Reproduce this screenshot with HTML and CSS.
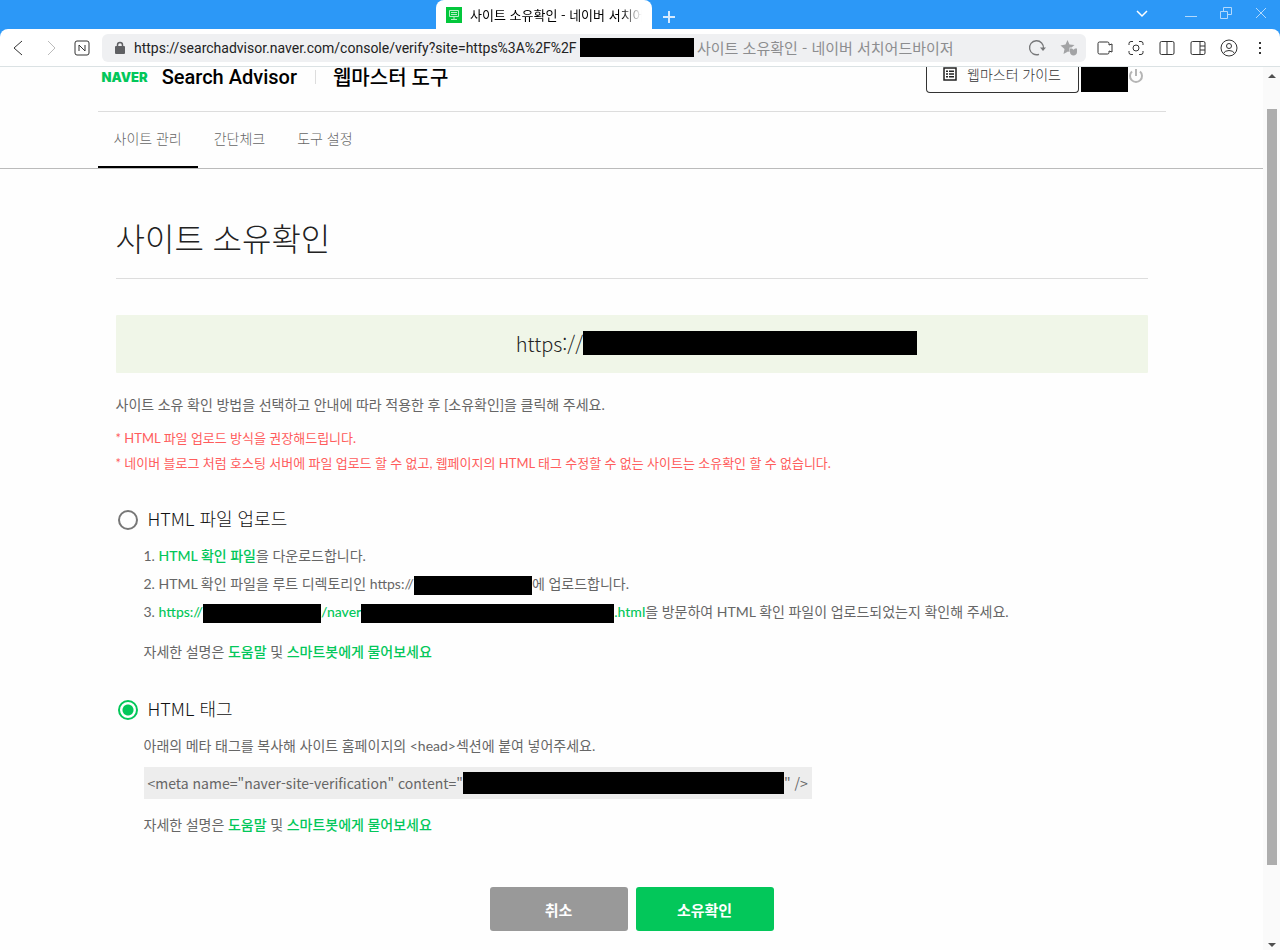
FILE: index.html
```
<!DOCTYPE html>
<html lang="ko">
<head>
    <meta charset="UTF-8">
    <meta name="viewport" content="width=device-width, initial-scale=1.0">
    <title>사이트 소유확인 - 네이버 서치어드바이저</title>
    <link rel="stylesheet" href="styles.css">
</head>
<body>
    <!-- Tab strip -->
    <div class="tab-strip">
        <div class="tab">
            <svg width="16" height="16" viewBox="0 0 16 16"><path fill="#03c73c" d="M0 0h16v16H0z"/><path fill="none" stroke="#b5efc6" d="M3.500 3.500h9v6h-9zM5 5.500h6M5 7.500h6M8 9.500v3M5 12.500h6"/></svg>
            <span class="tab-title">사이트 소유확인 - 네이버 서치어드바이저</span>
        </div>
        <button class="new-tab" aria-label="새 탭"><svg width="12" height="12" viewBox="0 0 12 12"><path stroke="#d5eaff" stroke-width="2" d="M6 0v12M0 6h12"/></svg></button>
        <div class="window-buttons">
            <button aria-label="탭 목록"><svg width="12" height="12" viewBox="0 0 12 12"><path stroke="#fff" stroke-width="1.500" d="M1 4l5 5 5-5"/></svg></button>
            <button aria-label="최소화"><svg width="12" height="12" viewBox="0 0 12 12"><path stroke="#b3d9fc" d="M0 9.500h12"/></svg></button>
            <button aria-label="복원"><svg width="12" height="12" viewBox="0 0 12 12"><path stroke="#b3d9fc" d="M.5 4.500h7v7h-7zM3.500 4.500v-4h8v7h-4"/></svg></button>
            <button aria-label="닫기"><svg width="12" height="12" viewBox="0 0 12 12"><path stroke="#b3d9fc" d="M1 1l10 10M11 1L1 11"/></svg></button>
        </div>
    </div>

    <!-- Toolbar -->
    <div class="toolbar">
        <div class="nav-buttons">
            <button aria-label="뒤로"><svg width="16" height="16" viewBox="0 0 16 16"><path d="M12 1L4 8l8 7"/></svg></button>
            <button class="off" aria-label="앞으로"><svg width="16" height="16" viewBox="0 0 16 16"><path d="M6 1l7 7-7 7"/></svg></button>
            <button aria-label="네이버 홈"><svg width="16" height="16" viewBox="0 0 16 16"><rect x="1" y="1" width="14" height="14" rx="2"/><path d="M5 11V5l6 6V5"/></svg></button>
        </div>
        <div class="address">
            <svg class="lock" width="12" height="14" viewBox="0 0 12 14"><rect x="1" y="5" width="10" height="8" rx="1" fill="#5f6063"/><path fill="none" stroke="#5f6063" stroke-width="1.500" d="M3.500 6V4a2.500 2.500 0 0 1 5 0v2"/></svg>
            <input class="url" type="text" aria-label="주소" value="https://searchadvisor.naver.com/console/verify?site=https%3A%2F%2F">
            <span class="mask mask-url"></span>
            <span class="url-title">사이트 소유확인 - 네이버 서치어드바이저</span>
            <div class="address-icons">
                <button aria-label="새로고침"><svg width="18" height="18" viewBox="0 0 18 18"><path stroke="#77787a" stroke-width="1.300" d="M11 15.300A7 7 0 1 1 15.500 9.500"/><path fill="#77787a" d="M12 8.500h6l-3 3.500z"/></svg></button>
                <button aria-label="북마크"><svg width="18" height="18" viewBox="0 0 18 18"><path fill="#a2a3a5" d="M7.500 1l2 4.500 5 .5-3 2.500H9.500v4.500L8 12.500l-4.500 2.500 1-5L.5 6.500l5-1zM10 9.500h2l1.500 1.200 1.500-1.200h2V13c0 2-1.500 3.500-3.500 3.500S10 15 10 13z"/></svg></button>
            </div>
        </div>
        <div class="tools">
            <button aria-label="녹화"><svg width="18" height="18" viewBox="0 0 18 18"><path d="M3.500 3h8q1.500 0 1.500 1.500V6l3-1v8l-3-1v1.500q0 1.500-1.500 1.500h-8Q2 15 2 13.500v-9Q2 3 3.500 3z"/></svg></button>
            <button aria-label="캡처"><svg width="18" height="18" viewBox="0 0 18 18"><path d="M2 6V4.500Q2 2.500 4 2.500h2M12 2.500h2q2 0 2 2V6M16 12v1.500q0 2-2 2h-2M6 15.500H4q-2 0-2-2V12"/><circle cx="9" cy="9" r="3"/></svg></button>
            <button aria-label="화면 분할"><svg width="18" height="18" viewBox="0 0 18 18"><rect x="2" y="2.500" width="14" height="13" rx="1.500"/><path d="M9 2.500v13"/></svg></button>
            <button aria-label="사이드바"><svg width="18" height="18" viewBox="0 0 18 18"><rect x="2" y="2.500" width="14" height="13" rx="1.500"/><path d="M11 2.500v13M11 7h5M11 11h5"/></svg></button>
            <button aria-label="프로필"><svg width="18" height="18" viewBox="0 0 18 18"><circle cx="9" cy="9" r="8"/><circle cx="9" cy="7" r="2.500"/><path d="M3.500 14.500q1-3 5.500-3t5.500 3"/></svg></button>
            <button aria-label="더보기"><svg width="18" height="18" viewBox="0 0 18 18"><path fill="#333" stroke="none" d="M8 3h2v2H8zM8 8h2v2H8zM8 13h2v2H8z"/></svg></button>
        </div>
    </div>

    <div class="viewport">
        <div class="page">
            <header class="header">
                <a class="naver" href="#">NAVER</a>
                <a class="logo" href="#">Search Advisor</a>
                <span class="service">웹마스터 도구</span>
                <div class="account">
                    <button class="guide">
                        <svg width="14" height="14" viewBox="0 0 14 14"><path fill="none" stroke="#222" stroke-width="1.500" d="M1 1h12v12H1z"/><path fill="#222" d="M3 3.500h2v1.500H3zM6 3.500h5v1.500H6zM3 6.300h2v1.500H3zM6 6.300h5v1.500H6zM3 9h2v1.500H3zM6 9h5v1.500H6z"/></svg>
                        웹마스터 가이드
                    </button>
                    <span class="mask mask-user"></span>
                    <button class="logout" aria-label="로그아웃"><svg width="16" height="16" viewBox="0 0 16 16"><path fill="none" stroke="#b5b5b5" stroke-width="2" d="M4 3.500a6 6 0 1 0 8 0M8 1v7"/></svg></button>
                </div>
            </header>
            <nav class="menu">
                <div class="menu-inner">
                    <a class="active" href="#">사이트 관리</a>
                    <a href="#">간단체크</a>
                    <a href="#">도구 설정</a>
                </div>
            </nav>

            <main class="content">
                <h1>사이트 소유확인</h1>
                <div class="site-box">https://<span class="mask mask-site"></span></div>
                <p class="intro">사이트 소유 확인 방법을 선택하고 안내에 따라 적용한 후 [소유확인]을 클릭해 주세요.</p>
                <p class="notice">* HTML 파일 업로드 방식을 권장해드립니다.</p>
                <p class="notice">* 네이버 블로그 처럼 호스팅 서버에 파일 업로드 할 수 없고, 웹페이지의 HTML 태그 수정할 수 없는 사이트는 소유확인 할 수 없습니다.</p>

                <form>
                    <section class="option">
                        <div class="option-title">
                            <input type="radio" name="method" id="method-file">
                            <label for="method-file">HTML 파일 업로드</label>
                        </div>
                        <div class="option-body">
                            <div class="step">1.&nbsp;<a href="#">HTML 확인 파일</a>을 다운로드합니다.</div>
                            <div class="step">2. HTML 확인 파일을 루트 디렉토리인 https://<span class="mask mask-host"></span>에 업로드합니다.</div>
                            <div class="step">3.&nbsp;<a href="#">https://<span class="mask mask-host"></span>/naver<span class="mask mask-file"></span>.html</a>을 방문하여 HTML 확인 파일이 업로드되었는지 확인해 주세요.</div>
                            <p class="help">자세한 설명은 <a href="#">도움말</a> 및 <a href="#">스마트봇에게 물어보세요</a></p>
                        </div>
                    </section>

                    <section class="option">
                        <div class="option-title">
                            <input type="radio" name="method" id="method-tag" checked>
                            <label for="method-tag">HTML 태그</label>
                        </div>
                        <div class="option-body">
                            <div class="step">아래의 메타 태그를 복사해 사이트 홈페이지의 &lt;head&gt;섹션에 붙여 넣어주세요.</div>
                            <code class="meta">&lt;meta name="naver-site-verification" content="<span class="mask mask-token"></span>" /&gt;</code>
                            <p class="help">자세한 설명은 <a href="#">도움말</a> 및 <a href="#">스마트봇에게 물어보세요</a></p>
                        </div>
                    </section>

                    <div class="actions">
                        <button type="button" class="cancel">취소</button>
                        <button type="button" class="confirm">소유확인</button>
                    </div>
                </form>
            </main>
        </div>
        <div class="scrollbar">
            <svg width="8" height="5" viewBox="0 0 8 5"><path fill="#505050" d="M0 5l4-4 4 4z"/></svg>
            <div class="thumb"></div>
            <svg width="8" height="5" viewBox="0 0 8 5"><path fill="#505050" d="M0 0l4 4 4-4z"/></svg>
        </div>
    </div>
</body>
</html>
```
FILE: styles.css
```
* { box-sizing: border-box; }
body {
    margin: 0;
    height: 100vh;
    display: flex;
    flex-direction: column;
    overflow: hidden;
    background-color: #2c98f7;
    color: #666;
    font-family: Lato, "Noto Sans CJK KR", sans-serif;
    font-size: 14px;
}
button {
    display: flex;
    align-items: center;
    justify-content: center;
    padding: 0;
    border: 0;
    background: none;
    font-family: inherit;
    cursor: pointer;
}
a {
    color: #03c75a;
    text-decoration: none;
}
svg {
    fill: none;
    flex-shrink: 0;
}
.mask {
    display: inline-block;
    background-color: #000;
    flex-shrink: 0;
}

/* Tab strip */
.tab-strip {
    display: flex;
    align-items: center;
    height: 29px;
    flex-shrink: 0;
    padding-left: 436px;
}
.tab {
    display: flex;
    align-items: center;
    gap: 8px;
    width: 216px;
    height: 29px;
    padding: 0 10px;
    background-color: #fff;
    border-radius: 8px 8px 0 0;
}
.tab-title {
    overflow: hidden;
    white-space: nowrap;
    font-family: "Noto Sans CJK KR", sans-serif;
    font-size: 13px;
    color: #000;
    -webkit-mask-image: linear-gradient(to right, #000 88%, transparent);
    mask-image: linear-gradient(to right, #000 88%, transparent);
}
.new-tab {
    width: 34px;
    height: 29px;
    padding-top: 4px;
}
.window-buttons {
    display: flex;
    margin-left: auto;
    padding: 0 2px 3px 0;
}
.window-buttons button {
    width: 35px;
    height: 26px;
}
.window-buttons button:first-child {
    margin-right: 14px;
}

/* Toolbar */
.toolbar {
    display: flex;
    align-items: center;
    height: 38px;
    flex-shrink: 0;
    background-color: #fff;
    border-bottom: 1px solid #dbe2e4;
    border-radius: 8px 8px 0 0;
}
.toolbar svg {
    stroke: #333;
}
.nav-buttons {
    display: flex;
    gap: 16px;
    padding: 0 12px 0 10px;
}
.nav-buttons .off svg {
    stroke: #bbb;
}
.address {
    display: flex;
    align-items: center;
    flex: 1;
    min-width: 0;
    height: 28px;
    padding: 0 8px 0 12px;
    background-color: #eff0f2;
    border-radius: 6px;
}
.toolbar .address svg {
    stroke: none;
}
.url {
    width: 446px;
    margin-left: 8px;
    padding: 0;
    border: 0;
    background: none;
    color: #222;
    font-family: Roboto, sans-serif;
    font-size: 14px;
    outline: none;
}
.mask-url {
    width: 114px;
    height: 19px;
}
.url-title {
    margin-left: 3px;
    color: #8c8d8f;
    font-family: "Noto Sans CJK KR", sans-serif;
    font-size: 15px;
    white-space: nowrap;
}
.address-icons {
    display: flex;
    gap: 14px;
    margin-left: auto;
}
.tools {
    display: flex;
    gap: 13px;
    padding: 0 11px 0 10px;
}

/* Page */
.viewport {
    display: flex;
    flex: 1;
    min-height: 0;
    background-color: #fefefe;
}
.page {
    flex: 1;
    min-width: 0;
    overflow: hidden;
}
.header {
    display: flex;
    align-items: center;
    max-width: 1068px;
    height: 45px;
    margin: 0 auto;
    padding: 0 22px 24px 4px;
    border-bottom: 1px solid #ddd;
}
.naver {
    font-family: Inter, sans-serif;
    font-size: 13px;
    font-weight: 900;
    line-height: 20px;
}
.logo {
    margin-left: 14px;
    color: #000;
    font-family: Roboto, sans-serif;
    font-size: 20px;
    font-weight: 500;
    line-height: 20px;
}
.service {
    margin-left: 18px;
    padding-left: 18px;
    color: #000;
    font-size: 20px;
    font-weight: 500;
    line-height: 20px;
    background: linear-gradient(#ddd, #ddd) left center / 1px 14px no-repeat;
}
.account {
    display: flex;
    align-self: flex-start;
    margin-left: auto;
}
.guide {
    gap: 10px;
    width: 153px;
    height: 26px;
    padding-bottom: 11px;
    border: 1px solid #333;
    border-top: 0;
    border-radius: 0 0 4px 4px;
    color: #333;
    font-size: 14px;
    font-weight: 300;
}
.mask-user {
    width: 47px;
    height: 25px;
    margin-left: 2px;
}
.logout {
    height: 18px;
}
.menu {
    border-bottom: 1px solid #bbb;
}
.menu-inner {
    display: flex;
    max-width: 1068px;
    margin: 0 auto;
}
.menu a {
    height: 56px;
    padding: 0 16px;
    color: #666;
    font-weight: 300;
    line-height: 54px;
}
.menu .active {
    border-bottom: 2px solid #000;
}
.content {
    max-width: 1068px;
    margin: 0 auto;
    padding: 45px 18px 19px;
}
h1 {
    margin: 0 0 36px;
    padding-bottom: 14px;
    border-bottom: 1px solid #ddd;
    color: #222;
    font-size: 32px;
    font-weight: 300;
    line-height: 50px;
}
.site-box {
    display: flex;
    align-items: center;
    justify-content: center;
    height: 58px;
    margin-bottom: 20px;
    padding: 0 0 2px 170px;
    background-color: #f0f6e8;
    border-radius: 1px;
    color: #222;
    font-family: "Noto Sans CJK KR", sans-serif;
    font-size: 20px;
    font-weight: 300;
}
.mask-site {
    width: 334px;
    height: 24px;
}
p {
    margin: 0;
}
.intro {
    margin-bottom: 9px;
    line-height: 24px;
}
.notice {
    color: #ff5c5c;
    font-size: 13px;
    line-height: 25px;
}
.option {
    margin-top: 31px;
}
.notice + form {
    margin-top: 30px;
}
.option-title {
    display: flex;
    align-items: center;
    gap: 10px;
    padding-left: 2px;
    color: #111;
    font-size: 18px;
    font-weight: 300;
}
.option-title label {
    padding-bottom: 4px;
    font-family: "Noto Sans CJK KR", sans-serif;
    line-height: 24px;
}
.option-title input {
    appearance: none;
    width: 20px;
    height: 20px;
    margin: 0;
    border: 2px solid #777;
    border-radius: 50%;
}
.option-title input:checked {
    border-color: #03c75a;
    background: radial-gradient(circle, #03c75a 5px, #fff 6px);
}
.option:first-child {
    margin-top: 0;
}
.option-body {
    padding: 8px 0 0 28px;
}
.step {
    line-height: 28px;
}
.step a, .help a {
    font-weight: 500;
}
.help {
    margin-top: 13px;
    line-height: 26px;
}
.step .mask {
    height: 19px;
    vertical-align: middle;
}
.mask-host {
    width: 118px;
}
.mask-file {
    width: 253px;
}
.meta {
    display: flex;
    align-items: center;
    width: fit-content;
    height: 32px;
    margin-top: 7px;
    padding: 0 4px;
    background-color: #ededed;
    font-family: "Noto Sans CJK KR", sans-serif;
    font-size: 14px;
    white-space: pre;
}
.mask-token {
    width: 321px;
    height: 22px;
}
.actions {
    display: flex;
    justify-content: center;
    gap: 8px;
    margin-top: 49px;
}
.actions button {
    width: 138px;
    height: 44px;
    border-radius: 3px;
    color: #fff;
    font-size: 15px;
    font-weight: 700;
}
.actions .cancel {
    background-color: #999;
}
.actions .confirm {
    background-color: #03c75a;
}

/* Scrollbar */
.scrollbar {
    display: flex;
    flex-direction: column;
    align-items: center;
    width: 17px;
    padding: 6px 0 2px;
    background-color: #fafafa;
}
.thumb {
    flex: 1;
    width: 10px;
    margin: 31px 0 78px;
    background-color: #adadad;
}
```
